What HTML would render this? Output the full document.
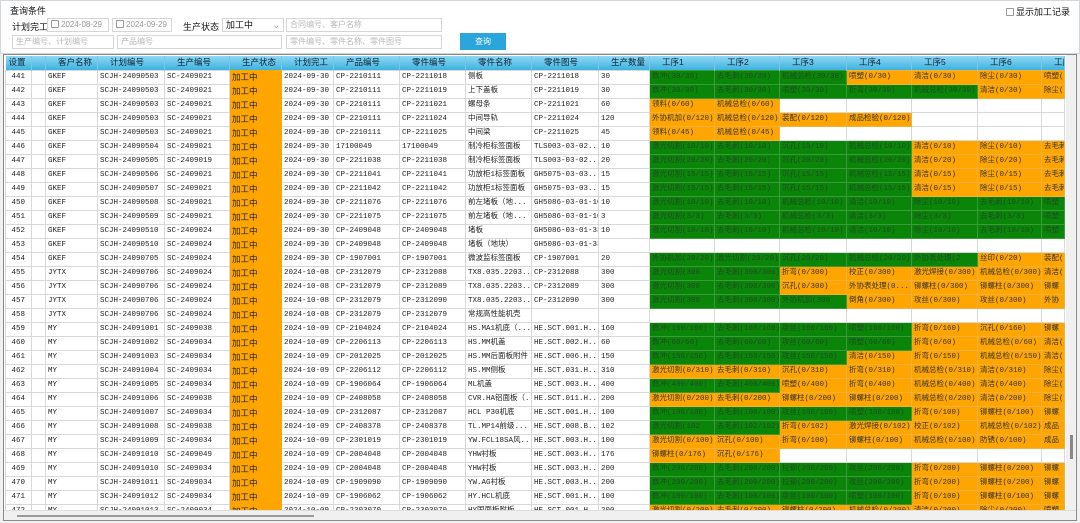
<!DOCTYPE html>
<html><head><meta charset="utf-8"><style>
*{margin:0;padding:0;box-sizing:border-box}
body{width:1080px;height:523px;background:#f0f0f0;font-family:"Liberation Sans","Noto Sans CJK SC",sans-serif;font-size:9px;color:#222;position:relative;overflow:hidden}
.top{position:absolute;left:0;top:0;width:1080px;height:54px;background:#fff;border:1px solid #cfd6dc}
.ab{position:absolute}
.inp{position:absolute;height:14px;border:1px solid #d6d6d6;background:#fff;color:#b8b8b8;font-size:8px;line-height:12px;padding-left:3px}
.lbl{position:absolute;font-size:9px;color:#111}
.cb{display:inline-block;width:8px;height:8px;border:1px solid #999;border-radius:1px;vertical-align:-1px;margin-right:2px;background:#fff}
.frame{position:absolute;left:3px;top:54px;width:1074px;height:467px;border:1px solid #8a8a8a;background:#fff;overflow:hidden}
table{position:absolute;left:1px;top:1px;border-collapse:collapse;table-layout:fixed;width:1059px}
th{height:14px;background:linear-gradient(#8fd8f3,#3db2e0);font-weight:normal;font-size:8.5px;line-height:13px;text-align:left;padding-left:12px;border-right:1px solid #7cc6e4;color:#102030;white-space:nowrap;overflow:hidden}
td{height:14px;line-height:12px;border:1px solid #d8d8d8;font-family:"Liberation Mono","Noto Sans CJK SC",monospace;font-size:7.5px;padding:0 0 0 2px;white-space:nowrap;overflow:hidden;color:#222}
td.n{text-align:right;padding-right:6px}
td.s{background:#ffa500;font-family:"Liberation Sans","Noto Sans CJK SC",sans-serif;font-size:8.5px;color:#222;border-color:#ffa500}
td.g{background:#0a850a;color:#1d4d1d;border-color:#3a9a3a}
td.o{background:#ffa500;color:#333;border-color:#f0b040}
.vs{position:absolute;left:1062px;top:0;width:11px;height:457px;background:#f0f0f0}
.hs{position:absolute;left:0;top:455px;width:1073px;height:11px;background:#f0f0f0;border-top:1px solid #ddd}
</style></head><body>
<div class="top">
<div class="lbl" style="left:9px;top:3px">查询条件</div>
<div class="lbl" style="left:1005px;top:4px"><span class="cb"></span>显示加工记录</div>
<div class="lbl" style="left:11px;top:19px">计划完工</div>
<div class="inp" style="left:46px;top:17px;width:62px;color:#999"><span class="cb"></span>2024-08-29 ⌄</div>
<div class="inp" style="left:111px;top:17px;width:60px;color:#999"><span class="cb"></span>2024-09-29 ⌄</div>
<div class="lbl" style="left:182px;top:19px">生产状态</div>
<div class="inp" style="left:221px;top:17px;width:62px;color:#111;font-size:9px">加工中<span style="position:absolute;right:3px;color:#999">⌄</span></div>
<div class="inp" style="left:285px;top:17px;width:156px">合同编号、客户名称</div>
<div class="inp" style="left:11px;top:34px;width:102px">生产编号、计划编号</div>
<div class="inp" style="left:116px;top:34px;width:165px">产品编号</div>
<div class="inp" style="left:285px;top:34px;width:156px">零件编号、零件名称、零件图号</div>
<div class="ab" style="left:459px;top:32px;width:46px;height:17px;background:#2aa6dd;color:#fff;font-size:8px;text-align:center;line-height:17px">查询</div>
</div>
<div class="frame">
<table>
<colgroup><col style="width:26px"><col style="width:14px"><col style="width:52px"><col style="width:67px"><col style="width:65px"><col style="width:52px"><col style="width:52px"><col style="width:66px"><col style="width:66px"><col style="width:66px"><col style="width:67px"><col style="width:51px"><col style="width:65px"><col style="width:65px"><col style="width:67px"><col style="width:65px"><col style="width:66px"><col style="width:64px"><col style="width:23px"></colgroup>
<tr><th style="padding-left:3px">设置</th><th></th><th>客户名称</th><th>计划编号</th><th>生产编号</th><th>生产状态</th><th>计划完工</th><th>产品编号</th><th>零件编号</th><th>零件名称</th><th>零件图号</th><th>生产数量</th><th>工序1</th><th>工序2</th><th>工序3</th><th>工序4</th><th>工序5</th><th>工序6</th><th>工序</th></tr>
<tr><td class="n">441</td><td></td><td>GKEF</td><td>SCJH-24090503</td><td>SC-2409021</td><td class="s">加工中</td><td>2024-09-30</td><td>CP-2210111</td><td>CP-2211018</td><td>侧板</td><td>CP-2211018</td><td>30</td><td class="g">数冲(30/30)</td><td class="g">去毛刺(30/30)</td><td class="g">机械总检(30/30)</td><td class="o">喷塑(0/30)</td><td class="o">清洁(0/30)</td><td class="o">除尘(0/30)</td><td class="o">喷塑(</td></tr>
<tr><td class="n">442</td><td></td><td>GKEF</td><td>SCJH-24090503</td><td>SC-2409021</td><td class="s">加工中</td><td>2024-09-30</td><td>CP-2210111</td><td>CP-2211019</td><td>上下盖板</td><td>CP-2211019</td><td>30</td><td class="g">数冲(30/30)</td><td class="g">去毛刺(30/30)</td><td class="g">喷塑(30/30)</td><td class="g">折弯(30/30)</td><td class="g">机械总检(30/30)</td><td class="o">清洁(0/30)</td><td class="o">除尘(</td></tr>
<tr><td class="n">443</td><td></td><td>GKEF</td><td>SCJH-24090503</td><td>SC-2409021</td><td class="s">加工中</td><td>2024-09-30</td><td>CP-2210111</td><td>CP-2211021</td><td>螺母条</td><td>CP-2211021</td><td>60</td><td class="o">领料(0/60)</td><td class="o">机械总检(0/60)</td><td></td><td></td><td></td><td></td><td></td></tr>
<tr><td class="n">444</td><td></td><td>GKEF</td><td>SCJH-24090503</td><td>SC-2409021</td><td class="s">加工中</td><td>2024-09-30</td><td>CP-2210111</td><td>CP-2211024</td><td>中间导轨</td><td>CP-2211024</td><td>120</td><td class="o">外协机加(0/120)</td><td class="o">机械总检(0/120)</td><td class="o">装配(0/120)</td><td class="o">成品检验(0/120)</td><td></td><td></td><td></td></tr>
<tr><td class="n">445</td><td></td><td>GKEF</td><td>SCJH-24090503</td><td>SC-2409021</td><td class="s">加工中</td><td>2024-09-30</td><td>CP-2210111</td><td>CP-2211025</td><td>中间梁</td><td>CP-2211025</td><td>45</td><td class="o">领料(0/45)</td><td class="o">机械总检(0/45)</td><td></td><td></td><td></td><td></td><td></td></tr>
<tr><td class="n">446</td><td></td><td>GKEF</td><td>SCJH-24090504</td><td>SC-2409021</td><td class="s">加工中</td><td>2024-09-30</td><td>17100049</td><td>17100049</td><td>制冷柜标签面板</td><td>TLS003-03-02...</td><td>10</td><td class="g">激光切割(10/10)</td><td class="g">去毛刺(10/10)</td><td class="g">沉孔(10/10)</td><td class="g">机械总检(10/10)</td><td class="o">清洁(0/10)</td><td class="o">除尘(0/10)</td><td class="o">去毛刺</td></tr>
<tr><td class="n">447</td><td></td><td>GKEF</td><td>SCJH-24090505</td><td>SC-2409019</td><td class="s">加工中</td><td>2024-09-30</td><td>CP-2211038</td><td>CP-2211038</td><td>制冷柜标签面板</td><td>TLS003-03-02...</td><td>20</td><td class="g">激光切割(20/20)</td><td class="g">去毛刺(20/20)</td><td class="g">沉孔(20/20)</td><td class="g">机械总检(20/20)</td><td class="o">清洁(0/20)</td><td class="o">除尘(0/20)</td><td class="o">去毛刺</td></tr>
<tr><td class="n">448</td><td></td><td>GKEF</td><td>SCJH-24090506</td><td>SC-2409021</td><td class="s">加工中</td><td>2024-09-30</td><td>CP-2211041</td><td>CP-2211041</td><td>功放柜1标签面板</td><td>GH5075-03-03...</td><td>15</td><td class="g">激光切割(15/15)</td><td class="g">去毛刺(15/15)</td><td class="g">沉孔(15/15)</td><td class="g">机械总检(15/15)</td><td class="o">清洁(0/15)</td><td class="o">除尘(0/15)</td><td class="o">去毛刺</td></tr>
<tr><td class="n">449</td><td></td><td>GKEF</td><td>SCJH-24090507</td><td>SC-2409021</td><td class="s">加工中</td><td>2024-09-30</td><td>CP-2211042</td><td>CP-2211042</td><td>功放柜1标签面板</td><td>GH5075-03-03...</td><td>15</td><td class="g">激光切割(15/15)</td><td class="g">去毛刺(15/15)</td><td class="g">沉孔(15/15)</td><td class="g">机械总检(15/15)</td><td class="o">清洁(0/15)</td><td class="o">除尘(0/15)</td><td class="o">去毛刺</td></tr>
<tr><td class="n">450</td><td></td><td>GKEF</td><td>SCJH-24090508</td><td>SC-2409021</td><td class="s">加工中</td><td>2024-09-30</td><td>CP-2211076</td><td>CP-2211076</td><td>前左堵板（地...</td><td>GH5086-03-01-10</td><td>10</td><td class="g">激光切割(10/10)</td><td class="g">去毛刺(10/10)</td><td class="g">机械总检(10/10)</td><td class="g">清洁(10/10)</td><td class="g">除尘(10/10)</td><td class="g">去毛刺(10/10)</td><td class="g">喷塑</td></tr>
<tr><td class="n">451</td><td></td><td>GKEF</td><td>SCJH-24090509</td><td>SC-2409021</td><td class="s">加工中</td><td>2024-09-30</td><td>CP-2211075</td><td>CP-2211075</td><td>前左堵板（地...</td><td>GH5086-03-01-10</td><td>3</td><td class="g">激光切割(3/3)</td><td class="g">去毛刺(3/3)</td><td class="g">机械总检(3/3)</td><td class="g">清洁(3/3)</td><td class="g">除尘(3/3)</td><td class="g">去毛刺(3/3)</td><td class="g">喷塑</td></tr>
<tr><td class="n">452</td><td></td><td>GKEF</td><td>SCJH-24090510</td><td>SC-2409024</td><td class="s">加工中</td><td>2024-09-30</td><td>CP-2409048</td><td>CP-2409048</td><td>堵板</td><td>GH5086-03-01-33</td><td>10</td><td class="g">激光切割(10/10)</td><td class="g">去毛刺(10/10)</td><td class="g">机械总检(10/10)</td><td class="g">清洁(10/10)</td><td class="g">除尘(10/10)</td><td class="g">去毛刺(10/10)</td><td class="g">喷塑</td></tr>
<tr><td class="n">453</td><td></td><td>GKEF</td><td>SCJH-24090510</td><td>SC-2409024</td><td class="s">加工中</td><td>2024-09-30</td><td>CP-2409048</td><td>CP-2409048</td><td>堵板（地块）</td><td>GH5086-03-01-33</td><td></td><td></td><td></td><td></td><td></td><td></td><td></td><td></td></tr>
<tr><td class="n">454</td><td></td><td>GKEF</td><td>SCJH-24090705</td><td>SC-2409024</td><td class="s">加工中</td><td>2024-09-30</td><td>CP-1907001</td><td>CP-1907001</td><td>微波监标签面板</td><td>CP-1907001</td><td>20</td><td class="g">外协机加(20/20)</td><td class="g">激光切割(20/20)</td><td class="g">沉孔(20/20)</td><td class="g">机械总检(20/20)</td><td class="g">外协表处理(2</td><td class="o">丝印(0/20)</td><td class="o">装配(</td></tr>
<tr><td class="n">455</td><td></td><td>JYTX</td><td>SCJH-24090706</td><td>SC-2409024</td><td class="s">加工中</td><td>2024-10-08</td><td>CP-2312079</td><td>CP-2312088</td><td>TX8.035.2203...</td><td>CP-2312088</td><td>300</td><td class="g">激光切割(300</td><td class="g">去毛刺(300/300)</td><td class="o">折弯(0/300)</td><td class="o">校正(0/300)</td><td class="o">激光焊接(0/300)</td><td class="o">机械总检(0/300)</td><td class="o">清洁(</td></tr>
<tr><td class="n">456</td><td></td><td>JYTX</td><td>SCJH-24090706</td><td>SC-2409024</td><td class="s">加工中</td><td>2024-10-08</td><td>CP-2312079</td><td>CP-2312089</td><td>TX8.035.2203...</td><td>CP-2312089</td><td>300</td><td class="g">激光切割(300</td><td class="g">去毛刺(300/300)</td><td class="o">沉孔(0/300)</td><td class="o">外协表处理(0...</td><td class="o">铆螺柱(0/300)</td><td class="o">铆螺柱(0/300)</td><td class="o">铆螺</td></tr>
<tr><td class="n">457</td><td></td><td>JYTX</td><td>SCJH-24090706</td><td>SC-2409024</td><td class="s">加工中</td><td>2024-10-08</td><td>CP-2312079</td><td>CP-2312090</td><td>TX8.035.2203...</td><td>CP-2312090</td><td>300</td><td class="g">激光切割(300</td><td class="g">去毛刺(300/300)</td><td class="g">外协机加(300</td><td class="o">倒角(0/300)</td><td class="o">攻丝(0/300)</td><td class="o">攻丝(0/300)</td><td class="o">外协</td></tr>
<tr><td class="n">458</td><td></td><td>JYTX</td><td>SCJH-24090706</td><td>SC-2409024</td><td class="s">加工中</td><td>2024-10-08</td><td>CP-2312079</td><td>CP-2312079</td><td>常规高性能机壳</td><td></td><td></td><td></td><td></td><td></td><td></td><td></td><td></td><td></td></tr>
<tr><td class="n">459</td><td></td><td>MY</td><td>SCJH-24091001</td><td>SC-2409038</td><td class="s">加工中</td><td>2024-10-09</td><td>CP-2104024</td><td>CP-2104024</td><td>HS.MA1机底（...</td><td>HE.SCT.001.H...</td><td>160</td><td class="g">数冲(160/160)</td><td class="g">去毛刺(160/160)</td><td class="g">攻丝(160/160)</td><td class="g">喷塑(160/160)</td><td class="o">折弯(0/160)</td><td class="o">沉孔(0/160)</td><td class="o">铆螺</td></tr>
<tr><td class="n">460</td><td></td><td>MY</td><td>SCJH-24091002</td><td>SC-2409034</td><td class="s">加工中</td><td>2024-10-09</td><td>CP-2206113</td><td>CP-2206113</td><td>HS.MM机盖</td><td>HE.SCT.002.H...</td><td>60</td><td class="g">数冲(60/60)</td><td class="g">去毛刺(60/60)</td><td class="g">攻丝(60/60)</td><td class="g">喷塑(60/60)</td><td class="o">折弯(0/60)</td><td class="o">机械总检(0/60)</td><td class="o">清洁(</td></tr>
<tr><td class="n">461</td><td></td><td>MY</td><td>SCJH-24091003</td><td>SC-2409034</td><td class="s">加工中</td><td>2024-10-09</td><td>CP-2012025</td><td>CP-2012025</td><td>HS.MM后面板附件</td><td>HE.SCT.006.H...</td><td>150</td><td class="g">数冲(150/150)</td><td class="g">去毛刺(150/150)</td><td class="g">攻丝(150/150)</td><td class="o">清洁(0/150)</td><td class="o">折弯(0/150)</td><td class="o">机械总检(0/150)</td><td class="o">清洁(</td></tr>
<tr><td class="n">462</td><td></td><td>MY</td><td>SCJH-24091004</td><td>SC-2409034</td><td class="s">加工中</td><td>2024-10-09</td><td>CP-2206112</td><td>CP-2206112</td><td>HS.MM侧板</td><td>HE.SCT.031.H...</td><td>310</td><td class="o">激光切割(0/310)</td><td class="o">去毛刺(0/310)</td><td class="o">沉孔(0/310)</td><td class="o">折弯(0/310)</td><td class="o">机械总检(0/310)</td><td class="o">清洁(0/310)</td><td class="o">除尘(</td></tr>
<tr><td class="n">463</td><td></td><td>MY</td><td>SCJH-24091005</td><td>SC-2409034</td><td class="s">加工中</td><td>2024-10-09</td><td>CP-1906064</td><td>CP-1906064</td><td>ML机盖</td><td>HE.SCT.003.H...</td><td>400</td><td class="g">数冲(400/400)</td><td class="g">去毛刺(400/400)</td><td class="o">喷塑(0/400)</td><td class="o">折弯(0/400)</td><td class="o">机械总检(0/400)</td><td class="o">清洁(0/400)</td><td class="o">除尘(</td></tr>
<tr><td class="n">464</td><td></td><td>MY</td><td>SCJH-24091006</td><td>SC-2409038</td><td class="s">加工中</td><td>2024-10-09</td><td>CP-2408058</td><td>CP-2408058</td><td>CVR.HA铝面板（...</td><td>HE.SCT.011.H...</td><td>200</td><td class="o">激光切割(0/200)</td><td class="o">去毛刺(0/200)</td><td class="o">铆螺柱(0/200)</td><td class="o">铆螺柱(0/200)</td><td class="o">机械总检(0/200)</td><td class="o">清洁(0/200)</td><td class="o">除尘(</td></tr>
<tr><td class="n">465</td><td></td><td>MY</td><td>SCJH-24091007</td><td>SC-2409034</td><td class="s">加工中</td><td>2024-10-09</td><td>CP-2312087</td><td>CP-2312087</td><td>HCL P30机底</td><td>HE.SCT.001.H...</td><td>100</td><td class="g">数冲(100/100)</td><td class="g">去毛刺(100/100)</td><td class="g">攻丝(100/100)</td><td class="g">喷塑(100/100)</td><td class="o">折弯(0/100)</td><td class="o">铆螺柱(0/100)</td><td class="o">铆螺</td></tr>
<tr><td class="n">466</td><td></td><td>MY</td><td>SCJH-24091008</td><td>SC-2409038</td><td class="s">加工中</td><td>2024-10-09</td><td>CP-2408378</td><td>CP-2408378</td><td>TL.MP14前级...</td><td>HE.SCT.008.B...</td><td>102</td><td class="g">激光切割(102</td><td class="g">去毛刺(102/102)</td><td class="o">折弯(0/102)</td><td class="o">激光焊接(0/102)</td><td class="o">校正(0/102)</td><td class="o">机械总检(0/102)</td><td class="o">成品</td></tr>
<tr><td class="n">467</td><td></td><td>MY</td><td>SCJH-24091009</td><td>SC-2409034</td><td class="s">加工中</td><td>2024-10-09</td><td>CP-2301019</td><td>CP-2301019</td><td>YW.FCL18SA风...</td><td>HE.SCT.003.H...</td><td>100</td><td class="o">激光切割(0/100)</td><td class="o">沉孔(0/100)</td><td class="o">折弯(0/100)</td><td class="o">铆螺柱(0/100)</td><td class="o">机械总检(0/100)</td><td class="o">防锈(0/100)</td><td class="o">成品</td></tr>
<tr><td class="n">468</td><td></td><td>MY</td><td>SCJH-24091010</td><td>SC-2409049</td><td class="s">加工中</td><td>2024-10-09</td><td>CP-2004048</td><td>CP-2004048</td><td>YHW衬板</td><td>HE.SCT.003.H...</td><td>176</td><td class="o">铆螺柱(0/176)</td><td class="o">沉孔(0/176)</td><td></td><td></td><td></td><td></td><td></td></tr>
<tr><td class="n">469</td><td></td><td>MY</td><td>SCJH-24091010</td><td>SC-2409034</td><td class="s">加工中</td><td>2024-10-09</td><td>CP-2004048</td><td>CP-2004048</td><td>YHW衬板</td><td>HE.SCT.003.H...</td><td>200</td><td class="g">数冲(200/200)</td><td class="g">去毛刺(200/200)</td><td class="g">拉铆(200/200)</td><td class="g">攻丝(200/200)</td><td class="o">折弯(0/200)</td><td class="o">铆螺柱(0/200)</td><td class="o">铆螺</td></tr>
<tr><td class="n">470</td><td></td><td>MY</td><td>SCJH-24091011</td><td>SC-2409034</td><td class="s">加工中</td><td>2024-10-09</td><td>CP-1909090</td><td>CP-1909090</td><td>YW.AG衬板</td><td>HE.SCT.003.H...</td><td>200</td><td class="g">数冲(200/200)</td><td class="g">去毛刺(200/200)</td><td class="g">拉铆(200/200)</td><td class="g">攻丝(200/200)</td><td class="o">折弯(0/200)</td><td class="o">铆螺柱(0/200)</td><td class="o">铆螺</td></tr>
<tr><td class="n">471</td><td></td><td>MY</td><td>SCJH-24091012</td><td>SC-2409034</td><td class="s">加工中</td><td>2024-10-09</td><td>CP-1906062</td><td>CP-1906062</td><td>HY.HCL机底</td><td>HE.SCT.001.H...</td><td>100</td><td class="g">数冲(100/100)</td><td class="g">去毛刺(100/100)</td><td class="g">攻丝(100/100)</td><td class="g">喷塑(100/100)</td><td class="o">折弯(0/100)</td><td class="o">铆螺柱(0/100)</td><td class="o">铆螺</td></tr>
<tr><td class="n">472</td><td></td><td>MY</td><td>SCJH-24091013</td><td>SC-2409034</td><td class="s">加工中</td><td>2024-10-09</td><td>CP-2303070</td><td>CP-2303070</td><td>HY国面板附板</td><td>HE.SCT.001.H...</td><td>200</td><td class="o">激光切割(0/200)</td><td class="o">去毛刺(0/200)</td><td class="o">铆螺柱(0/200)</td><td class="o">机械总检(0/200)</td><td class="o">清洁(0/200)</td><td class="o">除尘(0/200)</td><td class="o">喷塑</td></tr>
</table>
<div class="vs"><div style="position:absolute;left:4px;top:380px;width:3px;height:24px;background:#888"></div></div>
<div class="hs"><div style="position:absolute;left:13px;top:4px;width:297px;height:2px;background:#999"></div></div>
</div>
</body></html>
